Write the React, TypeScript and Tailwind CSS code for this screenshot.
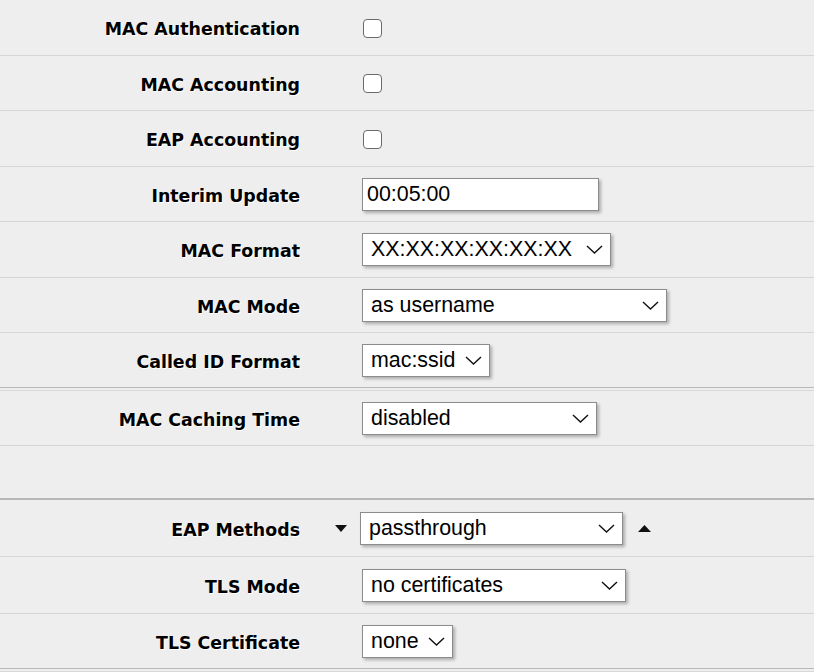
import React from "react";

const labelFont = { fontFamily: '"DejaVu Sans", Verdana, sans-serif' };
const valueFont = { fontFamily: '"Liberation Sans", Arial, sans-serif' };

function Chevron() {
  return (
    <svg width="17" height="9" viewBox="0 0 17 9" className="shrink-0">
      <polyline points="1,1 8.5,8 16,1" fill="none" stroke="#111" strokeWidth="1.4" />
    </svg>
  );
}

function Select({ value, width }: { value: string; width: string }) {
  return (
    <div
      className={`${width} h-[33px] flex items-center justify-between pl-[8px] pr-[7px] bg-white border border-[#8c8c8c] shadow-[2px_2px_3px_rgba(0,0,0,0.28)] text-[21.4px] text-black`}
      style={valueFont}
    >
      <span className="whitespace-nowrap">{value}</span>
      <Chevron />
    </div>
  );
}

function Checkbox() {
  return <div className="ml-[1px] mt-[1px] w-[19px] h-[19px] bg-white border-[1.5px] border-[#6b6b6b] rounded-[4px]" />;
}

function Label({ children }: { children: React.ReactNode }) {
  return (
    <div
      className="w-[300px] shrink-0 pt-[4px] text-right font-bold text-[17.4px] text-black [text-shadow:1px_1px_0_#fff]"
      style={labelFont}
    >
      {children}
    </div>
  );
}

function Row({
  label,
  height,
  border = "border-b border-[#d6d6d6]",
  children,
}: {
  label: string;
  height: string;
  border?: string;
  children: React.ReactNode;
}) {
  return (
    <div className={`flex items-center ${height} ${border}`}>
      <Label>{label}</Label>
      <div className="flex items-center pl-[62px]">{children}</div>
    </div>
  );
}

export default function App() {
  return (
    <div className="w-[814px] h-[672px] overflow-hidden bg-[#eeeeee]">
      {/* RADIUS MAC / accounting */}
      <Row label="MAC Authentication" height="h-[56px]">
        <Checkbox />
      </Row>
      <Row label="MAC Accounting" height="h-[55px]">
        <Checkbox />
      </Row>
      <Row label="EAP Accounting" height="h-[56px]">
        <Checkbox />
      </Row>
      <Row label="Interim Update" height="h-[55px]">
        <input
          type="text"
          defaultValue="00:05:00"
          className="w-[237px] h-[33px] px-[4px] bg-white border border-[#8c8c8c] shadow-[2px_2px_3px_rgba(0,0,0,0.28)] text-[21.4px] text-black outline-none"
          style={valueFont}
        />
      </Row>
      <Row label="MAC Format" height="h-[56px]">
        <Select value="XX:XX:XX:XX:XX:XX" width="w-[249px]" />
      </Row>
      <Row label="MAC Mode" height="h-[55px]">
        <Select value="as username" width="w-[305px]" />
      </Row>
      <Row label="Called ID Format" height="h-[55px]" border="border-b border-[#b8b8b8]">
        <Select value="mac:ssid" width="w-[128px]" />
      </Row>
      <div className="h-[3px] border-b border-[#d8d8d8]" />

      <Row label="MAC Caching Time" height="h-[55px]">
        <Select value="disabled" width="w-[235px]" />
      </Row>
      <div className="h-[54px] border-b-2 border-[#b8b8b8]" />

      {/* EAP */}
      <div className="flex items-center h-[57px] border-b border-[#d6d6d6]">
        <Label>EAP Methods</Label>
        <div className="flex items-center pl-[35px] gap-[13px]">
          <svg width="12" height="7" viewBox="0 0 12 7">
            <polygon points="0,0 12,0 6,7" fill="#111" />
          </svg>
          <Select value="passthrough" width="w-[263px]" />
          <svg width="13" height="7" viewBox="0 0 13 7" className="ml-[2px]">
            <polygon points="0,7 13,7 6.5,0" fill="#111" />
          </svg>
        </div>
      </div>
      <Row label="TLS Mode" height="h-[57px]">
        <Select value="no certificates" width="w-[264px]" />
      </Row>
      <Row label="TLS Certificate" height="h-[55px]" border="border-b border-[#b8b8b8]">
        <Select value="none" width="w-[91px]" />
      </Row>
      <div className="h-[3px] border-b border-[#d8d8d8]" />
    </div>
  );
}
